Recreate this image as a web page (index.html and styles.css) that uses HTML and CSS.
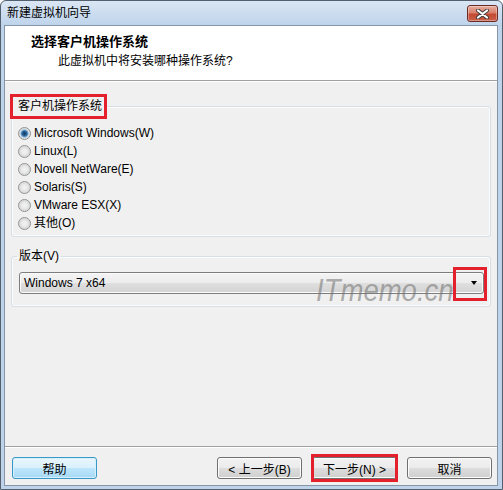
FILE: index.html
```html
<!DOCTYPE html>
<html lang="zh-CN">
<head>
<meta charset="utf-8">
<title>新建虚拟机向导</title>
<link rel="stylesheet" href="styles.css">
</head>
<body>
<div class="window">
  <div class="titlebar">
    <span class="title">新建虚拟机向导</span>
    <button class="close" aria-label="关闭">
      <svg width="15" height="10" viewBox="0 0 15 10">
        <path d="M3 1.5 L12 8.5 M12 1.5 L3 8.5" stroke="#3b3b3b" stroke-width="4" stroke-linecap="round" fill="none"/>
        <path d="M3 1.5 L12 8.5 M12 1.5 L3 8.5" stroke="#ffffff" stroke-width="2.2" stroke-linecap="round" fill="none"/>
      </svg>
    </button>
  </div>
  <div class="client">
    <div class="header">
      <div class="h-title">选择客户机操作系统</div>
      <div class="h-sub">此虚拟机中将安装哪种操作系统?</div>
    </div>
    <div class="body">
      <fieldset class="group os">
        <legend class="legend marked">客户机操作系统</legend>
        <label class="radio"><span class="dot checked"></span>Microsoft Windows(W)</label>
        <label class="radio"><span class="dot"></span>Linux(L)</label>
        <label class="radio"><span class="dot"></span>Novell NetWare(E)</label>
        <label class="radio"><span class="dot"></span>Solaris(S)</label>
        <label class="radio"><span class="dot"></span>VMware ESX(X)</label>
        <label class="radio"><span class="dot"></span>其他(O)</label>
      </fieldset>
      <fieldset class="group ver">
        <legend class="legend plain">版本(V)</legend>
        <div class="combo">
          <span class="combo-text">Windows 7 x64</span>
          <span class="arrow"></span>
          <span class="wm">ITmemo.cn</span>
          <span class="mark"></span>
        </div>
      </fieldset>
    </div>
    <div class="footer">
      <button class="btn help">帮助</button>
      <button class="btn back">&lt; 上一步(B)</button>
      <button class="btn next">下一步(N) &gt;</button>
      <button class="btn">取消</button>
    </div>
  </div>
</div>
</body>
</html>
```
FILE: styles.css
```css
* { box-sizing: border-box; }
html, body { margin: 0; padding: 0; }
body {
  width: 503px;
  height: 490px;
  overflow: hidden;
  background: #ffffff;
  font-family: "Liberation Sans", "Noto Sans CJK SC", sans-serif;
  font-size: 12px;
  color: #000;
}
.window {
  width: 503px;
  height: 490px;
  display: flex;
  flex-direction: column;
  border: 1px solid #52606f;
  border-radius: 6px 6px 0 0;
  background: linear-gradient(#dae6f4 0, #bfd4eb 24px, #bed3ea 100%);
}
.titlebar {
  height: 24px;
  display: flex;
  align-items: center;
  padding: 0 4px 0 6px;
}
.title {
  font-size: 12px;
  line-height: 16px;
  color: #000;
}
.close {
  margin-left: auto;
  align-self: flex-start;
  margin-top: 4px;
  width: 31px;
  height: 17px;
  padding: 0;
  border: 1px solid #6b2a22;
  border-radius: 3px;
  background: linear-gradient(#e6ae9f 0, #d9806c 45%, #c44a31 55%, #c9604a 100%);
  box-shadow: inset 0 0 0 1px rgba(255,255,255,0.35);
  display: flex;
  align-items: center;
  justify-content: center;
}
.close svg { display: block; }
.client {
  flex: 1;
  margin: 0 4px 3px 3px;
  border: 1px solid #8596a9;
  background: #f0f0f0;
  display: flex;
  flex-direction: column;
}
.header {
  height: 55px;
  background: #ffffff;
  border-bottom: 1px solid #a0a0a0;
  padding: 8px 0 0 26px;
}
.h-title {
  font-weight: bold;
  font-size: 13px;
  line-height: 16px;
}
.h-sub {
  margin: 3px 0 0 27px;
  line-height: 16px;
}
.body {
  flex: 1;
  padding: 13px 6px 0 6px;
  box-shadow: inset 0 1px 0 #ffffff;
}
.group {
  margin: 0;
  min-width: 0;
  border: 1px solid #d5dfe5;
  border-radius: 3px;
  box-shadow: inset 0 0 0 1px #fbfbfb;
}
.os { padding: 5px 6px 4px 6px; }
.ver { margin-top: 12px; padding: 8px 6px 12px 7px; }
.legend {
  line-height: 15px;
  font-size: 12px;
}
.legend.marked {
  margin-left: -8px;
  padding: 2px 2px 2px 5px;
  line-height: 15px;
  border: 3px solid #e3202b;
  background: #f0f0f0;
}
.legend.plain {
  margin-left: -2px;
  padding: 0 2px;
}
.radio {
  display: flex;
  align-items: center;
  height: 18px;
  gap: 3px;
  line-height: 16px;
}
.dot {
  width: 13px;
  height: 13px;
  border-radius: 50%;
  border: 1px solid #8f9294;
  background: radial-gradient(circle at 50% 50%, #f3f3f3 0, #e9e9e9 3px, #d9d9d9 5px, #f7f7f7 6px);
  flex: none;
}
.dot.checked {
  background: radial-gradient(circle at 50% 50%, #0f3d68 0, #24598a 2px, #4d86b8 3px, #a9c9e4 4px, #e4e4e4 4.6px, #d9d9d9 5px, #f7f7f7 6px);
}
.combo {
  position: relative;
  height: 22px;
  display: flex;
  align-items: center;
  padding-left: 4px;
  border: 1px solid #7d7d7d;
  border-radius: 3px;
  background: linear-gradient(#f4f4f4 0, #ececec 50%, #dfdfdf 51%, #d3d3d3 100%);
  box-shadow: inset 0 0 0 1px #fbfbfb;
}
.combo-text { line-height: 16px; }
.arrow {
  margin-left: auto;
  margin-right: 6px;
  width: 0;
  height: 0;
  border-left: 3.5px solid transparent;
  border-right: 3.5px solid transparent;
  border-top: 4px solid #000;
}
.wm {
  position: absolute;
  left: 296px;
  top: 1px;
  font-family: "Liberation Sans", sans-serif;
  font-style: italic;
  font-size: 32px;
  line-height: 32px;
  color: rgba(110, 110, 110, 0.55);
  transform: scaleX(0.86);
  transform-origin: 0 0;
  white-space: nowrap;
  pointer-events: none;
}
.mark {
  position: absolute;
  left: 433px;
  top: -6px;
  width: 34px;
  height: 34px;
  border: 3px solid #e3202b;
}
.footer {
  height: 39px;
  display: flex;
  align-items: flex-start;
  gap: 10px;
  padding: 10px 5px 6px 7px;
  border-top: 1px solid #a0a0a0;
  box-shadow: inset 0 1px 0 #ffffff;
}
.btn {
  width: 85px;
  height: 22px;
  padding: 0;
  font-family: "Liberation Sans", "Noto Sans CJK SC", sans-serif;
  font-size: 12px;
  color: #000;
  border: 1px solid #707070;
  border-radius: 3px;
  background: linear-gradient(#f2f2f2 0, #ebebeb 50%, #dddddd 51%, #cfcfcf 100%);
  box-shadow: inset 0 0 0 1px #fcfcfc;
}
.btn.help {
  border-color: #3a98c8;
  background: linear-gradient(#eaf6fd 0, #d9f0fc 50%, #bee6fd 51%, #a7d9f5 100%);
  box-shadow: inset 0 0 0 1px #d6f0fb;
}
.btn.back { margin-left: auto; }
.btn.next { position: relative; }
.btn.next::after {
  content: "";
  position: absolute;
  left: -2px;
  right: -2px;
  top: -4px;
  bottom: -4px;
  border: 3px solid #e3202b;
}
```
